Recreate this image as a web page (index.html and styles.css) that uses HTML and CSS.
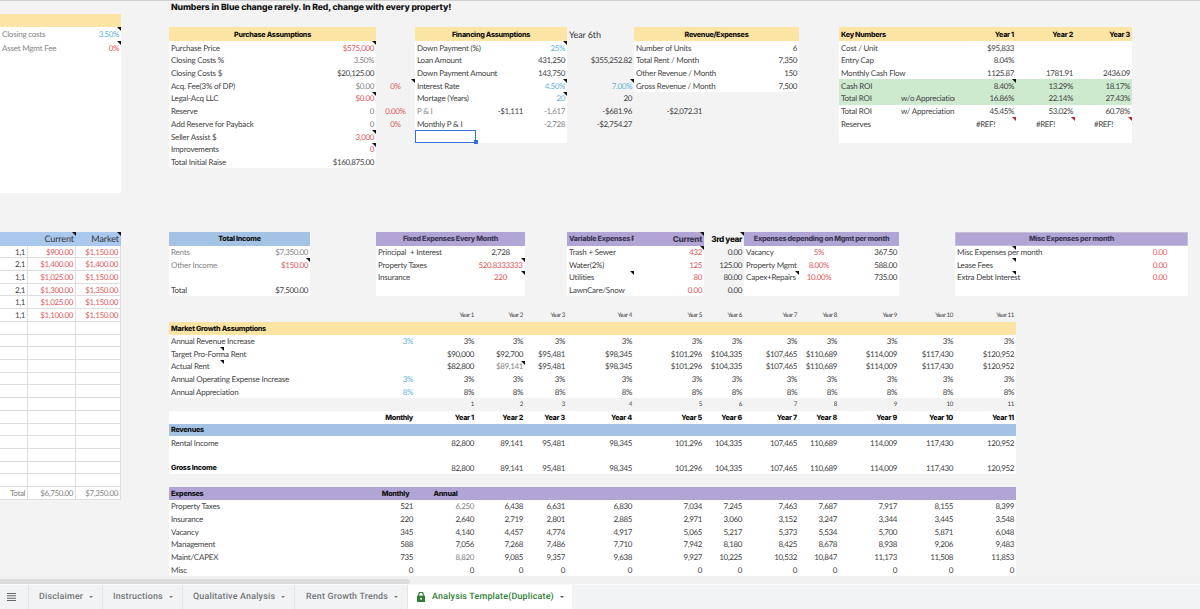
FILE: index.html
```html
<!DOCTYPE html>
<html lang="en">
<head>
<meta charset="utf-8">
<title>Analysis Template</title>
<link rel="stylesheet" href="styles.css">
</head>
<body>
<main class="sheet">
<div class="tr h13"><b class="c5 s8 title">Numbers in Blue change rarely. In Red, change with every property!</b></div>
<div class="tr h13"><i class="yel c1 s3"></i></div>
<div class="tr h14">
<i class="w c1 s3"></i><span class="c1 s2 gry">Closing costs</span><span class="c3 n blu m">3.50%</span>
<b class="c5 s2 yel ct hd">Purchase Assumptions</b>
<b class="c8 s3 yel ct hd">Financing Assumptions</b>
<span class="c11 big">Year 6th</span>
<b class="c12 s3 yel ct hd">Revenue/Expenses</b>
<i class="yel c16 s5"></i><b class="c16 s2 hd">Key Numbers</b><b class="c18 n hd">Year 1</b><b class="c19 n hd">Year 2</b><b class="c20 n hd">Year 3</b>
</div>
<div class="tr">
<i class="w c1 s3"></i><span class="c1 s2 gry">Asset Mgmt Fee</span><span class="c3 n red m">0%</span>
<i class="w c5 s2"></i><span class="c5">Purchase Price</span><span class="c6 n red m">$575,000</span>
<i class="w c8 s3"></i><span class="c8">Down Payment (%)</span><span class="c10 n blu m">25%</span>
<i class="w c12 s3"></i><span class="c12 s2">Number of Units</span><span class="c14 n">6</span>
<i class="w c16 s5"></i><span class="c16">Cost / Unit</span><span class="c18 n">$95,833</span>
</div>
<div class="tr">
<i class="w c1 s3"></i>
<i class="w c5 s2"></i><span class="c5">Closing Costs %</span><span class="c6 n gry">3.50%</span>
<i class="w c8 s3"></i><span class="c8">Loan Amount</span><span class="c10 n">431,250</span><span class="c11 n">$355,252.82</span>
<i class="w c12 s3"></i><span class="c12 s2">Total Rent / Month</span><span class="c14 n">7,350</span>
<i class="w c16 s5"></i><span class="c16">Entry Cap</span><span class="c18 n">8.04%</span>
</div>
<div class="tr">
<i class="w c1 s3"></i>
<i class="w c5 s2"></i><span class="c5">Closing Costs $</span><span class="c6 n">$20,125.00</span>
<i class="w c8 s3"></i><span class="c8 s2">Down Payment Amount</span><span class="c10 n">143,750</span>
<i class="w c12 s3"></i><span class="c12 s2">Other Revenue / Month</span><span class="c14 n">150</span>
<i class="w c16 s5"></i><span class="c16 s2">Monthly Cash Flow</span><span class="c18 n">1125.87</span><span class="c19 n">1781.91</span><span class="c20 n">2436.09</span>
</div>
<div class="tr">
<i class="w c1 s3"></i>
<i class="w c5 s2"></i><span class="c5">Acq. Fee(3% of DP)</span><span class="c6 n gry">$0.00</span><span class="c7 ct red m">0%</span>
<i class="w c8 s3"></i><span class="c8">Interest Rate</span><span class="c10 n blu m">4.50%</span><span class="c11 n blu m">7.00%</span>
<i class="w c12 s3"></i><span class="c12 s2">Gross Revenue / Month</span><span class="c14 n">7,500</span>
<i class="grn c16 s5"></i><span class="c16">Cash ROI</span><span class="c18 n m">8.40%</span><span class="c19 n">13.29%</span><span class="c20 n">18.17%</span>
</div>
<div class="tr">
<i class="w c1 s3"></i>
<i class="w c5 s2"></i><span class="c5">Legal-Acq LLC</span><span class="c6 n red m">$0.00</span>
<i class="w c8 s3"></i><span class="c8">Mortage (Years)</span><span class="c10 n blu m">20</span><span class="c11 n">20</span>
<i class="grn c16 s5"></i><span class="c16">Total ROI</span><span class="c17 clip">w/o Appreciation</span><span class="c18 n">16.86%</span><span class="c19 n">22.14%</span><span class="c20 n">27.43%</span>
</div>
<div class="tr">
<i class="w c1 s3"></i>
<i class="w c5 s2"></i><span class="c5">Reserve</span><span class="c6 n gry">0</span><span class="c7 ct red">0.00%</span>
<i class="w c8 s3"></i><span class="c8 gry">P &amp; I</span><span class="c9 n">-$1,111</span><span class="c10 n gry">-1,617</span><span class="c11 n">-$681.96</span><span class="c12 n">-$2,072.31</span>
<i class="w c16 s5"></i><span class="c16">Total ROI</span><span class="c17 s2">w/ Appreciation</span><span class="c18 n">45.45%</span><span class="c19 n">53.02%</span><span class="c20 n">60.78%</span>
</div>
<div class="tr">
<i class="w c1 s3"></i>
<i class="w c5 s2"></i><span class="c5">Add Reserve for Payback</span><span class="c6 n gry">0</span><span class="c7 ct red">0%</span>
<i class="w c8 s3"></i><span class="c8">Monthly P &amp; I</span><span class="c10 n gry">-2,728</span><span class="c11 n">-$2,754.27</span>
<i class="w c16 s5"></i><span class="c16">Reserves</span><span class="c18 ct mr">#REF!</span><span class="c19 ct mr">#REF!</span><span class="c20 ct mr">#REF!</span>
</div>
<div class="tr">
<i class="w c1 s3"></i>
<i class="w c5 s2"></i><span class="c5">Seller Assist $</span><span class="c6 n red m">3,000</span>
<i class="w c8 s3"></i><i class="c8 sel"></i>
<i class="w c16 s5"></i>
</div>
<div class="tr">
<i class="w c1 s3"></i>
<i class="w c5 s2"></i><span class="c5">Improvements</span><span class="c6 n red m">0</span>
</div>
<div class="tr">
<i class="w c1 s3"></i>
<i class="w c5 s2"></i><span class="c5">Total Initial Raise</span><span class="c6 n">$160,875.00</span>
</div>
<div class="tr"><i class="w c1 s3"></i></div>
<div class="tr"><i class="w c1 s3"></i></div>
<div class="tr"></div>
<div class="tr"></div>
<div class="tr"></div>

<div class="tr h14">
<i class="hblue c1 s3"></i><span class="c2 n big m">Current</span><span class="c3 n big m">Market</span>
<b class="c5 blue ct hd">Total Income</b>
<b class="c7 s3 pur ct hd mut">Fixed Expenses Every Month</b>
<i class="pur c11 s2"></i><b class="c11 clip hd mut">Variable Expenses Per Month</b><b class="c12 n hd mut m big2">Current</b>
<b class="c13 n big3 m">3rd year</b>
<b class="c14 s3 pur ct hd mut">Expenses depending on Mgmt per month</b>
<b class="c18 s4 pur ct hd mut edge">Misc Expenses per month</b>
</div>
<div class="tr">
<span class="g c1 n">1,1</span><span class="g c2 n red">$900.00</span><span class="g c3 n red">$1,150.00</span>
<i class="w c5"></i><span class="c5 gry">Rents</span><span class="c5 n gry">$7,350.00</span>
<i class="w c7 s3"></i><span class="c7 s2">Principal&nbsp; + Interest</span><span class="c9 ct">2,728</span>
<i class="w c11 s2"></i><span class="c11">Trash + Sewer</span><span class="c12 n red m">432</span>
<span class="c13 n">0.00</span>
<i class="w c14 s3"></i><span class="c14">Vacancy</span><span class="c15 ct red">5%</span><span class="c16 n">367.50</span>
<i class="w c18 s4"></i><span class="c18 mn">Misc Expenses per month</span><span class="c21 ct red">0.00</span>
</div>
<div class="tr">
<span class="g c1 n">2,1</span><span class="g c2 n red">$1,400.00</span><span class="g c3 n red">$1,400.00</span>
<i class="w c5"></i><span class="c5 gry">Other Income</span><span class="c5 n red m">$150.00</span>
<i class="w c7 s3"></i><span class="c7 s2">Property Taxes</span><span class="c9 ct red m">520.8333333</span>
<i class="w c11 s2"></i><span class="c11">Water(2%)</span><span class="c12 n red">125</span>
<span class="c13 n">125.00</span>
<i class="w c14 s3"></i><span class="c14">Property Mgmt</span><span class="c15 ct red">8.00%</span><span class="c16 n">588.00</span>
<i class="w c18 s4"></i><span class="c18 mn">Lease Fees</span><span class="c21 ct red">0.00</span>
</div>
<div class="tr">
<span class="g c1 n">1,1</span><span class="g c2 n red">$1,025.00</span><span class="g c3 n red">$1,150.00</span>
<i class="w c5"></i>
<i class="w c7 s3"></i><span class="c7 s2">Insurance</span><span class="c9 ct red m">220</span>
<i class="w c11 s2"></i><span class="c11 m">Utilities</span><span class="c12 n red">80</span>
<span class="c13 n">80.00</span>
<i class="w c14 s3"></i><span class="c14 m">Capex+Repairs</span><span class="c15 ct red">10.00%</span><span class="c16 n">735.00</span>
<i class="w c18 s4"></i><span class="c18 mn">Extra Debt Interest</span><span class="c21 ct red">0.00</span>
</div>
<div class="tr">
<span class="g c1 n">2,1</span><span class="g c2 n red">$1,300.00</span><span class="g c3 n red">$1,350.00</span>
<i class="w c5"></i><span class="c5">Total</span><span class="c5 n">$7,500.00</span>
<i class="w c7 s3"></i>
<i class="w c11 s2"></i><span class="c11">LawnCare/Snow</span><span class="c12 n red">0.00</span>
<span class="c13 n">0.00</span>
<i class="w c14 s3"></i>
<i class="w c18 s4"></i>
</div>
<div class="tr h13">
<span class="g c1 n">1,1</span><span class="g c2 n red">$1,025.00</span><span class="g c3 n red">$1,150.00</span>
</div>
<div class="tr h125">
<span class="g c1 n">1,1</span><span class="g c2 n red">$1,100.00</span><span class="g c3 n red">$1,150.00</span>
<div class="vals tiny"><span></span><span>Year 1</span><span>Year 2</span><span>Year 3</span><span>Year 4</span><span>Year 5</span><span>Year 6</span><span>Year 7</span><span>Year 8</span><span>Year 9</span><span>Year 10</span><span>Year 11</span></div>
</div>
<div class="tr">
<i class="g c1"></i><i class="g c2"></i><i class="g c3"></i>
<b class="c5 s14 yel hd">Market Growth Assumptions</b>
</div>
<div class="tr">
<i class="g c1"></i><i class="g c2"></i><i class="g c3"></i>
<span class="c5 s2 w">Annual Revenue Increase</span>
<div class="vals w"><span class="blu">3%</span><span>3%</span><span>3%</span><span>3%</span><span>3%</span><span>3%</span><span>3%</span><span>3%</span><span>3%</span><span>3%</span><span>3%</span><span>3%</span></div>
</div>
<div class="tr">
<i class="g c1"></i><i class="g c2"></i><i class="g c3"></i>
<span class="c5 s2 w mid">Target Pro-Forma Rent</span>
<div class="vals w"><span></span><span>$90,000</span><span>$92,700</span><span>$95,481</span><span>$98,345</span><span>$101,296</span><span>$104,335</span><span>$107,465</span><span>$110,689</span><span>$114,009</span><span>$117,430</span><span>$120,952</span></div>
</div>
<div class="tr">
<i class="g c1"></i><i class="g c2"></i><i class="g c3"></i>
<span class="c5 s2 w mid">Actual Rent</span>
<div class="vals w"><span></span><span>$82,800</span><span class="gry m">$89,141</span><span>$95,481</span><span>$98,345</span><span>$101,296</span><span>$104,335</span><span>$107,465</span><span>$110,689</span><span>$114,009</span><span>$117,430</span><span>$120,952</span></div>
</div>
<div class="tr">
<i class="g c1"></i><i class="g c2"></i><i class="g c3"></i>
<span class="c5 s2 w">Annual Operating Expense Increase</span>
<div class="vals w"><span class="blu">3%</span><span>3%</span><span>3%</span><span>3%</span><span>3%</span><span>3%</span><span>3%</span><span>3%</span><span>3%</span><span>3%</span><span>3%</span><span>3%</span></div>
</div>
<div class="tr">
<i class="g c1"></i><i class="g c2"></i><i class="g c3"></i>
<span class="c5 s2 w">Annual Appreciation</span>
<div class="vals w"><span class="blu">8%</span><span>8%</span><span>8%</span><span>8%</span><span>8%</span><span>8%</span><span>8%</span><span>8%</span><span>8%</span><span>8%</span><span>8%</span><span>8%</span></div>
</div>
<div class="tr h125">
<i class="g c1"></i><i class="g c2"></i><i class="g c3"></i>
<div class="vals tiny"><span></span><span>1</span><span>2</span><span>3</span><span>4</span><span>5</span><span>6</span><span>7</span><span>8</span><span>9</span><span>10</span><span>11</span></div>
</div>
<div class="tr h13">
<i class="g c1"></i><i class="g c2"></i><i class="g c3"></i>
<i class="w c5 s2"></i>
<div class="vals w hd"><span>Monthly</span><span>Year 1</span><span>Year 2</span><span>Year 3</span><span>Year 4</span><span>Year 5</span><span>Year 6</span><span>Year 7</span><span>Year 8</span><span>Year 9</span><span>Year 10</span><span>Year 11</span></div>
</div>
<div class="tr">
<i class="g c1"></i><i class="g c2"></i><i class="g c3"></i>
<b class="c5 s14 blue hd">Revenues</b>
</div>
<div class="tr">
<i class="g c1"></i><i class="g c2"></i><i class="g c3"></i>
<span class="c5 s2 w">Rental Income</span>
<div class="vals w"><span></span><span>82,800</span><span>89,141</span><span>95,481</span><span>98,345</span><span>101,296</span><span>104,335</span><span>107,465</span><span>110,689</span><span>114,009</span><span>117,430</span><span>120,952</span></div>
</div>
<div class="tr">
<i class="g c1"></i><i class="g c2"></i><i class="g c3"></i>
<i class="c5 s14 w"></i>
</div>
<div class="tr">
<i class="g c1"></i><i class="g c2"></i><i class="g c3"></i>
<b class="c5 s2 w hd">Gross Income</b>
<div class="vals w"><span></span><span>82,800</span><span>89,141</span><span>95,481</span><span>98,345</span><span>101,296</span><span>104,335</span><span>107,465</span><span>110,689</span><span>114,009</span><span>117,430</span><span>120,952</span></div>
</div>
<div class="tr h125">
<i class="g c1"></i><i class="g c2"></i><i class="g c3"></i>
</div>
<div class="tr h13">
<span class="g c1 n gry">Total</span><span class="g c2 n gry">$6,750.00</span><span class="g c3 n gry">$7,350.00</span>
<b class="c5 s2 pur hd">Expenses</b>
<div class="vals pur hd heads"><span>Monthly</span><span>Annual</span></div>
</div>
<div class="tr">
<span class="c5 s2 w">Property Taxes</span>
<div class="vals w"><span>521</span><span class="gry">6,250</span><span>6,438</span><span>6,631</span><span>6,830</span><span>7,034</span><span>7,245</span><span>7,463</span><span>7,687</span><span>7,917</span><span>8,155</span><span>8,399</span></div>
</div>
<div class="tr">
<span class="c5 s2 w">Insurance</span>
<div class="vals w"><span>220</span><span>2,640</span><span>2,719</span><span>2,801</span><span>2,885</span><span>2,971</span><span>3,060</span><span>3,152</span><span>3,247</span><span>3,344</span><span>3,445</span><span>3,548</span></div>
</div>
<div class="tr">
<span class="c5 s2 w">Vacancy</span>
<div class="vals w"><span>345</span><span>4,140</span><span>4,457</span><span>4,774</span><span>4,917</span><span>5,065</span><span>5,217</span><span>5,373</span><span>5,534</span><span>5,700</span><span>5,871</span><span>6,048</span></div>
</div>
<div class="tr">
<span class="c5 s2 w">Management</span>
<div class="vals w"><span>588</span><span>7,056</span><span>7,268</span><span>7,486</span><span>7,710</span><span>7,942</span><span>8,180</span><span>8,425</span><span>8,678</span><span>8,938</span><span>9,206</span><span>9,483</span></div>
</div>
<div class="tr">
<span class="c5 s2 w">Maint/CAPEX</span>
<div class="vals w"><span>735</span><span class="gry">8,820</span><span>9,085</span><span>9,357</span><span>9,638</span><span>9,927</span><span>10,225</span><span>10,532</span><span>10,847</span><span>11,173</span><span>11,508</span><span>11,853</span></div>
</div>
<div class="tr">
<span class="c5 s2 w">Misc</span>
<div class="vals w"><span>0</span><span>0</span><span>0</span><span>0</span><span>0</span><span>0</span><span>0</span><span>0</span><span>0</span><span>0</span><span>0</span><span>0</span></div>
</div>
</main>
<div class="scroll"><div class="thumb"></div></div>
<nav class="tabs">
<div class="tab menu"><svg width="9" height="8" viewBox="0 0 9 8"><path d="M0 .5h9M0 2.8h9M0 5.2h9M0 7.5h9" stroke="#666" stroke-width="1.1"/></svg></div>
<div class="tab t1">Disclaimer<i class="arrow"></i></div>
<div class="tab t2">Instructions<i class="arrow"></i></div>
<div class="tab t3">Qualitative Analysis<i class="arrow"></i></div>
<div class="tab t4">Rent Growth Trends<i class="arrow"></i></div>
<div class="tab active"><svg width="8" height="10" viewBox="0 0 8 10"><path d="M0 3.6h8V10H0z" fill="#2e7d32"/><path d="M1.7 3.8V2.4a2.3 2.3 0 0 1 4.6 0v1.4" fill="none" stroke="#2e7d32" stroke-width="1.1"/><circle cx="4" cy="6.8" r="1" fill="#fff"/></svg>Analysis Template(Duplicate)<i class="arrow dark"></i></div>
</nav>
</body>
</html>
```
FILE: styles.css
```css
* { box-sizing: border-box; }
html, body { margin: 0; height: 100%; }
body {
  display: flex;
  flex-direction: column;
  height: 609px;
  overflow: hidden;
  background: #f3f3f3;
  font-family: "Lato", "Liberation Sans", sans-serif;
  font-size: 8px;
  letter-spacing: -.2px;
  color: #444;
  text-rendering: geometricPrecision;
}
.sheet {
  --cols: 28px 48px 45px 48px 141px 66px 39px 61px 49px 42px 67px 70px 40px 55px 40px 60px 56px 61px 59px 57px 56px 12px;
  flex: none;
  height: 577px;
  border-top: 1px solid #cfcfcf;
  overflow: hidden;
}
.tr {
  display: grid;
  grid-template-columns: var(--cols);
  height: 12.7px;
}
.h13 { height: 13px; }
.h14 { height: 14.2px; }
.h125 { height: 12.5px; }
.tr > * {
  grid-row: 1;
  display: flex;
  align-items: center;
  padding: 0 2px;
  white-space: nowrap;
  position: relative;
  font-style: normal;
  min-width: 0;
}
.c1 { grid-column-start: 1; }
.c2 { grid-column-start: 2; }
.c3 { grid-column-start: 3; }
.c5 { grid-column-start: 5; }
.c6 { grid-column-start: 6; }
.c7 { grid-column-start: 7; }
.c8 { grid-column-start: 8; }
.c9 { grid-column-start: 9; }
.c10 { grid-column-start: 10; }
.c11 { grid-column-start: 11; }
.c12 { grid-column-start: 12; }
.c13 { grid-column-start: 13; }
.c14 { grid-column-start: 14; }
.c15 { grid-column-start: 15; }
.c16 { grid-column-start: 16; }
.c17 { grid-column-start: 17; }
.c18 { grid-column-start: 18; }
.c19 { grid-column-start: 19; }
.c20 { grid-column-start: 20; }
.c21 { grid-column-start: 21; }
.s2 { grid-column-end: span 2; }
.s3 { grid-column-end: span 3; }
.s4 { grid-column-end: span 4; }
.s5 { grid-column-end: span 5; }
.s8 { grid-column-end: span 8; }
.s14 { grid-column-end: span 14; }

.n { justify-content: flex-end; letter-spacing: -.38px; }
.ct { justify-content: center; letter-spacing: -.38px; }
.clip { overflow: hidden; }
.w { background: #fff; }
.yel { background: #fce5a4; }
.blue { background: #a4c2e4; }
.hblue { background: #aac7ee; }
.pur { background: #b1a5d6; }
.grn { background: #cdeacf; }
.red { color: #e05c5c; }
.blu { color: #63b4d6; }
.gry { color: #858585; }

.title {
  font-family: "Inter", "Liberation Sans", sans-serif;
  font-weight: 800;
  font-size: 8.7px;
  letter-spacing: -.13px;
  color: #111;
  overflow: visible;
}
.tr > .hd, .vals.hd > span {
  font-family: "Inter", "Liberation Sans", sans-serif;
  font-weight: 800;
  font-size: 7.2px;
  letter-spacing: -.28px;
  color: #111;
}
.tr > .mut { color: #3c3755; }
.tr > .big { font-size: 9px; color: #333; letter-spacing: -.1px; }
.tr > .big2 { font-size: 8.2px; }
.big3 {
  font-family: "Inter", "Liberation Sans", sans-serif;
  font-size: 8.2px;
  font-weight: 800;
  color: #111;
}
.edge { border: 1px solid #c4bfd8; }
.tiny { font-size: 6.2px; }

.vals {
  grid-column: 7 / span 12;
  display: grid !important;
  grid-template-columns: 39px 61px 49px 42px 67px 70px 40px 55px 40px 60px 56px 61px;
  padding: 0 !important;
}
.vals > span {
  display: flex;
  align-items: center;
  justify-content: flex-end;
  padding: 0 2px;
  position: relative;
  letter-spacing: -.38px;
}
.vals.heads > span { justify-content: center; }

.g {
  background: #fff;
  border-right: 1px solid #dedede;
  border-bottom: 1px solid #dedede;
}

.m::after, .mr::after, .mn::after, .mid::after {
  content: "";
  position: absolute;
  top: 0;
  right: 0;
  width: 0;
  height: 0;
  border-style: solid;
  border-width: 0 4px 4px 0;
  border-color: transparent #111 transparent transparent;
}
.mr::after { border-color: transparent #c0202a transparent transparent; }
.mid::after { left: 51px; right: auto; }

.sel {
  border: 1.5px solid #3b6fd8;
  height: 13.4px;
  overflow: visible;
}
.sel::after {
  content: "";
  position: absolute;
  right: -3px;
  bottom: -2px;
  width: 4px;
  height: 4px;
  background: #3b6fd8;
}

.scroll {
  flex: none;
  height: 7px;
  padding-top: 2px;
  background: #f1f1f1;
}
.thumb { width: 410px; height: 5px; background: #dcdcdc; border-radius: 0 3px 3px 0; }

.tabs {
  flex: none;
  height: 25px;
  display: flex;
  background: #f1f3f4;
  border-top: 1px solid #fafafa;
  font-family: "Roboto", "Liberation Sans", sans-serif;
  font-weight: 500;
  font-size: 8.9px;
  letter-spacing: .2px;
  color: #727578;
  white-space: nowrap;
}
.tab {
  display: flex;
  align-items: center;
  height: 100%;
  border-right: 1px solid #e4e6e8;
}
.menu { width: 29px; padding-left: 7px; }
.t1 { width: 74px; padding-left: 10px; }
.t2 { width: 80px; padding-left: 10px; }
.t3 { width: 112px; padding-left: 10px; }
.t4 { width: 113px; padding-left: 11px; }
.active {
  width: 164px;
  padding-left: 9px;
  gap: 7px;
  background: #fff;
  color: #2e7d32;
  border: 0;
}
.arrow {
  width: 0;
  height: 0;
  margin-left: 6px;
  border-style: solid;
  border-width: 2.5px 2.5px 0;
  border-color: #777 transparent transparent;
}
.dark { border-color: #555 transparent transparent; margin-left: -1px; }
```
